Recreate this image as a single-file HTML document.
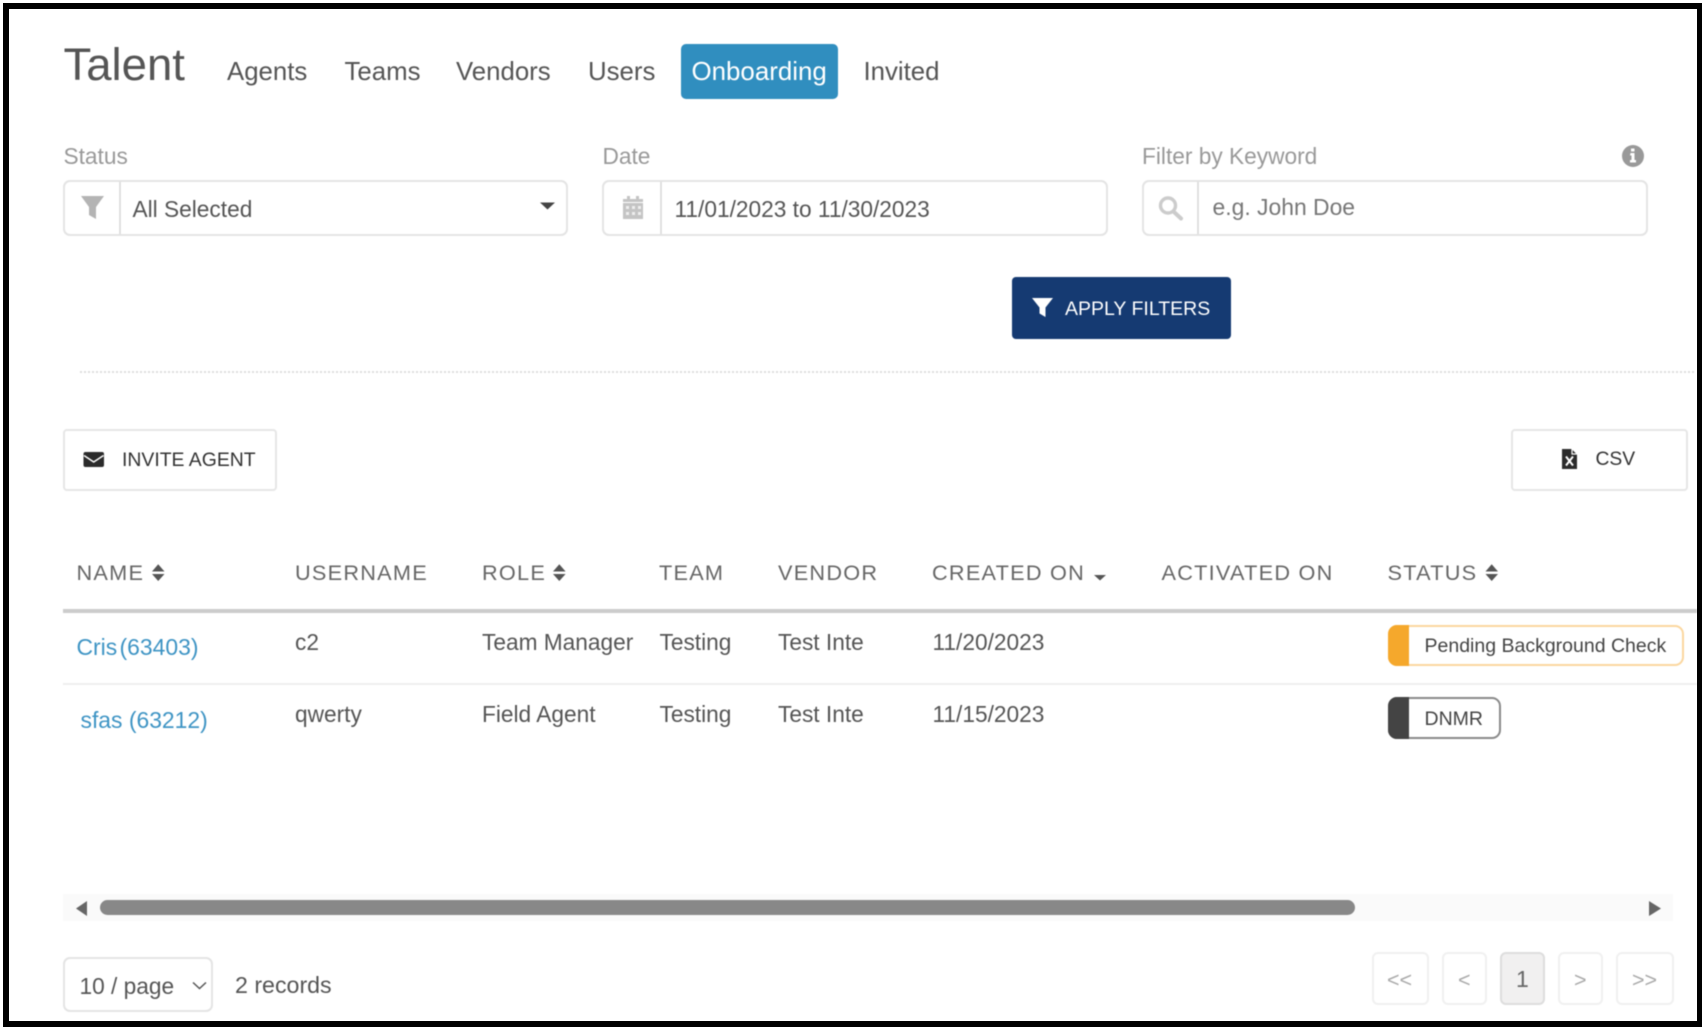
<!DOCTYPE html>
<html lang="en">
<head>
<meta charset="utf-8">
<title>Talent - Onboarding</title>
<style>
html,body{margin:0;padding:0;background:#fff;width:1702px;height:1027px;overflow:hidden}
body{position:relative;font-family:"Liberation Sans",Arial,sans-serif}
#c{position:absolute;left:0;top:0;width:1702px;height:1027px;filter:blur(.45px)}
.t{position:absolute;left:calc(var(--x)*1px);top:calc(var(--b)*1px - .3465*var(--f)*1px);font-size:calc(var(--f)*1px);line-height:0;white-space:nowrap;color:#555}
.b{position:absolute;box-sizing:border-box;background:#fff}
.lab{color:#999}
.th{color:#666;letter-spacing:1.25px}
.a{color:#3e94c4}
svg{position:absolute;left:0;top:0}
.frame{position:absolute;background:#000}
</style>
</head>
<body>
<div id="c">
<div class="b" style="left:681px;top:44px;width:157px;height:55px;background:#308ebf;border-radius:5px"></div>
<div class="b" style="left:63px;top:180px;width:505px;height:56px;border:2px solid #e4e4e4;border-radius:7px"></div>
<div class="b" style="left:602px;top:180px;width:506px;height:56px;border:2px solid #e4e4e4;border-radius:7px"></div>
<div class="b" style="left:1142px;top:180px;width:506px;height:56px;border:2px solid #e4e4e4;border-radius:7px"></div>
<div class="b" style="left:1012px;top:277px;width:219px;height:62px;background:#153a72;border-radius:4px"></div>
<div class="b" style="left:63px;top:429px;width:214px;height:62px;border:2px solid #e6e6e6;border-radius:4px"></div>
<div class="b" style="left:1511px;top:429px;width:177px;height:62px;border:2px solid #e6e6e6;border-radius:4px"></div>
<div class="b" style="left:63px;top:609px;width:1634px;height:4px;background:#ccc"></div>
<div class="b" style="left:63px;top:683px;width:1634px;height:2px;background:#eee"></div>
<div class="b" style="left:1388px;top:625px;width:296px;height:41px;border:2px solid #fbd79f;border-radius:9px"></div>
<div class="b" style="left:1388px;top:625px;width:21px;height:41px;background:#f5a82c;border-radius:9px 0 0 9px"></div>
<div class="b" style="left:1388px;top:697px;width:113px;height:42px;border:2px solid #8a8a8a;border-radius:9px"></div>
<div class="b" style="left:1388px;top:697px;width:21px;height:42px;background:#444;border-radius:9px 0 0 9px"></div>
<div class="b" style="left:63px;top:894px;width:1610px;height:27px;background:#fafafa"></div>
<div class="b" style="left:100px;top:900px;width:1255px;height:15px;background:#888;border-radius:8px"></div>
<div class="b" style="left:63px;top:957px;width:150px;height:55px;border:2px solid #e4e4e4;border-radius:7px"></div>
<div class="b" style="left:1372px;top:952px;width:57px;height:53px;border:2px solid #f0f0f0;border-radius:6px"></div>
<div class="b" style="left:1442px;top:952px;width:45px;height:53px;border:2px solid #f0f0f0;border-radius:6px"></div>
<div class="b" style="left:1500px;top:952px;width:45px;height:53px;border:2px solid #ddd;border-radius:6px;background:#f1f0f0"></div>
<div class="b" style="left:1558px;top:952px;width:45px;height:53px;border:2px solid #f0f0f0;border-radius:6px"></div>
<div class="b" style="left:1616px;top:952px;width:58px;height:53px;border:2px solid #f0f0f0;border-radius:6px"></div>

<svg width="1702" height="1027" viewBox="0 0 1702 1027">
<path d="M120 182V234M661 182V234M1198 182V234" stroke="#d8d8d8" stroke-width="1.5"/>
<path d="M80 372H1696" stroke="#ddd" stroke-width="2" stroke-dasharray="2 2"/>
<path d="M81 196H104L96 207V219L89 215V207Z" fill="#b4b4b4"/>
<path d="M540 202.500H555L547.500 209.500Z" fill="#444"/>
<path d="M623 199H643V219H623Z" fill="#c4c4c4"/>
<path d="M627 196h3v5h-3zM636 196h3v5h-3z" fill="#c4c4c4"/>
<path d="M623 202.500H643" stroke="#fff" stroke-width="1"/>
<path d="M626 206h3v3h-3zM632 206h3v3h-3zM638 206h3v3h-3zM626 212h3v3h-3zM632 212h3v3h-3zM638 212h3v3h-3z" fill="#eee"/>
<circle cx="1168" cy="205.500" r="7.500" fill="none" stroke="#ccc" stroke-width="3.400"/>
<path d="M1174 212L1181 218.500" stroke="#ccc" stroke-width="4" stroke-linecap="round"/>
<circle cx="1633" cy="156" r="11" fill="#999"/>
<path d="M1630.500 153h4v7h1.500v2.500h-6V160h1.500v-4.500h-1.500zM1631 148.500h3.500v3h-3.500z" fill="#fff"/>
<path d="M1032 298H1053L1045.500 307.500V317L1039.500 313.500V307.500Z" fill="#fff"/>
<path d="M85.500 452H102a2 2 0 0 1 2 2v11a2 2 0 0 1-2 2H85.500a2 2 0 0 1-2-2V454a2 2 0 0 1 2-2Z" fill="#2b2b2b"/>
<path d="M84 455.500L93.700 462L103.500 455.500" fill="none" stroke="#fff" stroke-width="1.500"/>
<path d="M1562 449H1571.500L1577 454.500V469H1562Z" fill="#2b2b2b"/>
<path d="M1572 449V454H1577" fill="none" stroke="#fff" stroke-width="1.200"/>
<path d="M1566 456.500L1573 465.500M1573 456.500L1566 465.500" stroke="#fff" stroke-width="2"/>
<path d="M152 571.500L158.200 564.300L164.500 571.500ZM152 574L158.200 581L164.500 574Z" fill="#555"/>
<path d="M553 571.500L559.300 564.300L565.600 571.500ZM553 574L559.300 581L565.600 574Z" fill="#555"/>
<path d="M1485.500 571.500L1491.700 564.300L1498 571.500ZM1485.500 574L1491.700 581L1498 574Z" fill="#555"/>
<path d="M1094 575H1106L1100 580.500Z" fill="#555"/>
<path d="M87 901V916L76 908.500Z" fill="#666"/>
<path d="M1649 901V916L1661 908.500Z" fill="#666"/>
<path d="M193 982.500L199.500 988.500L206 982.500" fill="none" stroke="#555" stroke-width="1.500"/>
</svg>

<span class="t" style="--x:63.500;--b:81;--f:45.500">Talent</span>
<span class="t" style="--x:227;--b:80.800;--f:25.800">Agents</span>
<span class="t" style="--x:344.500;--b:80.800;--f:25.800">Teams</span>
<span class="t" style="--x:456;--b:80.800;--f:25.800">Vendors</span>
<span class="t" style="--x:588;--b:80.800;--f:25.800">Users</span>
<span class="t" style="--x:691.500;--b:80.800;--f:25.900;color:#fff">Onboarding</span>
<span class="t" style="--x:863.500;--b:80.800;--f:25.800">Invited</span>

<span class="t lab" style="--x:63.500;--b:163.400;--f:22.700">Status</span>
<span class="t lab" style="--x:602.500;--b:163.400;--f:22.700">Date</span>
<span class="t lab" style="--x:1142;--b:163.400;--f:22.700">Filter by Keyword</span>

<span class="t" style="--x:132.500;--b:216.400;--f:22.700">All Selected</span>
<span class="t" style="--x:674.500;--b:216.400;--f:22.700">11/01/2023 to 11/30/2023</span>
<span class="t" style="--x:1212.500;--b:215.400;--f:22.900;color:#777">e.g. John Doe</span>

<span class="t" style="--x:1065;--b:315.500;--f:19.500;color:#fff">APPLY FILTERS</span>
<span class="t" style="--x:122;--b:466.500;--f:19.400;color:#333">INVITE AGENT</span>
<span class="t" style="--x:1595.500;--b:467;--f:19.300;color:#333">CSV</span>

<span class="t th" style="--x:76.500;--b:580.500;--f:21.700">NAME</span>
<span class="t th" style="--x:295;--b:580.500;--f:21.700">USERNAME</span>
<span class="t th" style="--x:482;--b:580.500;--f:21.700">ROLE</span>
<span class="t th" style="--x:659;--b:580.500;--f:21.700">TEAM</span>
<span class="t th" style="--x:778;--b:580.500;--f:21.700">VENDOR</span>
<span class="t th" style="--x:932;--b:580.500;--f:21.700">CREATED ON</span>
<span class="t th" style="--x:1161.500;--b:580.500;--f:21.700">ACTIVATED ON</span>
<span class="t th" style="--x:1387.500;--b:580.500;--f:21.700">STATUS</span>

<span class="t a" style="--x:76.500;--b:655.400;--f:22.900;word-spacing:-4px">Cris (63403)</span>
<span class="t" style="--x:295;--b:649.400;--f:22.700">c2</span>
<span class="t" style="--x:482;--b:649.400;--f:22.700">Team Manager</span>
<span class="t" style="--x:659.500;--b:649.400;--f:22.700">Testing</span>
<span class="t" style="--x:778;--b:649.400;--f:22.700">Test Inte</span>
<span class="t" style="--x:932.500;--b:649.400;--f:22.700">11/20/2023</span>
<span class="t" style="--x:1424.500;--b:653;--f:19.500;color:#444">Pending Background Check</span>

<span class="t a" style="--x:80.500;--b:728;--f:22.900">sfas (63212)</span>
<span class="t" style="--x:295;--b:722;--f:22.700">qwerty</span>
<span class="t" style="--x:482;--b:722;--f:22.700">Field Agent</span>
<span class="t" style="--x:659.500;--b:722;--f:22.700">Testing</span>
<span class="t" style="--x:778;--b:722;--f:22.700">Test Inte</span>
<span class="t" style="--x:932.500;--b:722;--f:22.700">11/15/2023</span>
<span class="t" style="--x:1424.500;--b:725.500;--f:19.500;color:#444">DNMR</span>

<span class="t" style="--x:79.500;--b:993.400;--f:22.700">10 / page</span>
<span class="t" style="--x:235;--b:993.400;--f:23.200">2 records</span>

<span class="t" style="--x:1387;--b:987;--f:21.500;color:#aaa">&lt;&lt;</span>
<span class="t" style="--x:1458;--b:987;--f:21.500;color:#aaa">&lt;</span>
<span class="t" style="--x:1516;--b:987;--f:23;color:#666">1</span>
<span class="t" style="--x:1574;--b:987;--f:21.500;color:#aaa">&gt;</span>
<span class="t" style="--x:1632;--b:987;--f:21.500;color:#aaa">&gt;&gt;</span>
</div>

<div class="frame" style="left:3px;top:3px;width:1699px;height:6px"></div>
<div class="frame" style="left:3px;top:3px;width:6px;height:1024px"></div>
<div class="frame" style="left:1697px;top:3px;width:5px;height:1024px"></div>
<div class="frame" style="left:3px;top:1021px;width:1699px;height:6px"></div>
</body>
</html>
